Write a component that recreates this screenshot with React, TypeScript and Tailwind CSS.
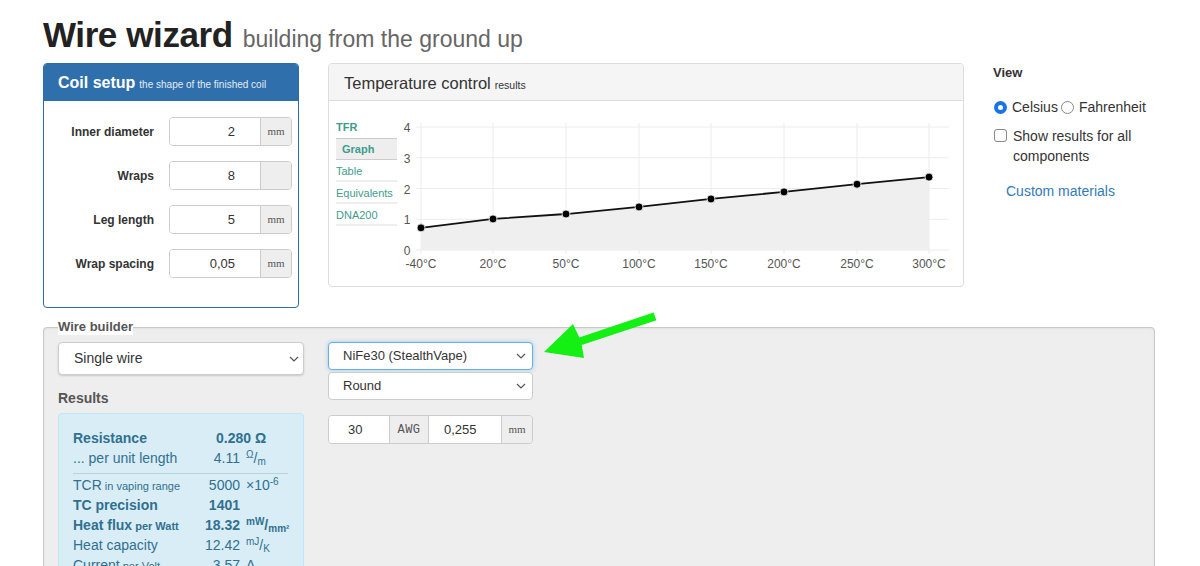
import React from 'react'

const xs = [421, 493, 566, 639, 711, 784, 857, 929]
const xLabels = ['-40°C', '20°C', '50°C', '100°C', '150°C', '200°C', '250°C', '300°C']
const vals = [0.72, 1.01, 1.17, 1.4, 1.66, 1.89, 2.14, 2.37]
const OX = 397
const OY = 101
const yOf = (v: number) => 250 - v * 30.75

function Chevron() {
  return (
    <svg width="10" height="6" viewBox="0 0 10 6" className="shrink-0">
      <path d="M1 1l4 4 4-4" fill="none" stroke="#555" strokeWidth="1.2" />
    </svg>
  )
}

function CoilRow({ label, value, unit }: { label: string; value: string; unit: string }) {
  return (
    <div className="flex items-center h-[29px]">
      <div className="w-[110px] text-right text-[12px] font-bold text-[#333]">{label}</div>
      <div className="ml-[15px] flex h-[29px] rounded-[4px] border border-[#ccc] overflow-hidden">
        <div className="w-[90px] bg-white text-right pr-[25px] text-[13px] text-[#333] flex items-center justify-end">
          {value}
        </div>
        <div className="w-[31px] bg-[#eee] border-l border-[#ccc] flex items-center justify-center text-[11px] text-[#555] font-['Liberation_Serif',serif]">
          {unit}
        </div>
      </div>
    </div>
  )
}

function Chart() {
  const pts = xs.map((x, i) => [x - OX, yOf(vals[i]) - OY])
  const line = pts.map((p) => p.join(',')).join(' ')
  const area = `${xs[0] - OX},${250 - OY} ${line} ${xs[7] - OX},${250 - OY}`
  return (
    <svg width="565" height="185" className="block">
      {[0, 1, 2, 3, 4].map((v) => (
        <g key={v}>
          <line x1={416 - OX} x2={949 - OX} y1={yOf(v) - OY} y2={yOf(v) - OY} stroke="#ececec" />
          <text x={407 - OX} y={yOf(v) - OY + 5} textAnchor="middle" fontSize="12" fill="#555">
            {v}
          </text>
        </g>
      ))}
      {xs.map((x, i) => (
        <g key={x}>
          <line x1={x - OX} x2={x - OX} y1={123 - OY} y2={254 - OY} stroke="#ececec" />
          <text x={x - OX} y={268 - OY} textAnchor="middle" fontSize="12" fill="#555">
            {xLabels[i]}
          </text>
        </g>
      ))}
      <polygon points={area} fill="#efefef" />
      <polyline points={line} fill="none" stroke="#111" strokeWidth="1.8" />
      {pts.map((p, i) => (
        <circle key={i} cx={p[0]} cy={p[1]} r="4" fill="#000" stroke="#fff" strokeWidth="0.8" />
      ))}
    </svg>
  )
}

function Tabs() {
  return (
    <div className="w-[61px] pt-[18px] text-[11px] text-[#3f9c8d]">
      <div className="font-bold h-[19px] leading-[17px]">TFR</div>
      <div className="h-[22px] bg-[#eee] border-t border-b border-[#ccc] font-bold pl-[6px] leading-[20px]">Graph</div>
      <div className="h-[22px] leading-[22px] border-b-2 border-[#eee]">Table</div>
      <div className="h-[22px] leading-[22px] border-b-2 border-[#eee]">Equivalents</div>
      <div className="h-[22px] leading-[22px] border-b-2 border-[#eee]">DNA200</div>
    </div>
  )
}

function ResRow({
  label,
  small,
  value,
  unit,
  bold,
}: {
  label: string
  small?: string
  value: string
  unit?: React.ReactNode
  bold?: boolean
}) {
  return (
    <div className={`flex items-center h-[20px] ${bold ? 'font-bold' : ''}`}>
      <div className="w-[125px] whitespace-nowrap">
        {label}
        {small && <span className="text-[11px]"> {small}</span>}
      </div>
      <div className="w-[42px] text-right">{value}</div>
      <div className="pl-[6px] whitespace-nowrap">{unit}</div>
    </div>
  )
}

export default function App() {
  return (
    <div className="relative min-h-[566px] bg-white font-['Liberation_Sans',Arial,sans-serif] text-[#333] pl-[43px] pt-[15px]">
      <div className="flex items-baseline h-[40px] mb-[8px]">
        <h1 className="text-[35px] font-bold text-[#222] leading-[40px] tracking-[-0.4px]">Wire wizard</h1>
        <span className="ml-[10px] text-[23px] text-[#666]">building from the ground up</span>
      </div>

      <div className="flex items-start">
        <div className="w-[256px] h-[245px] rounded-[4px] border border-[#2e6da4] overflow-hidden">
          <div className="h-[37px] bg-[#2f6fab] flex items-baseline pl-[14px] pt-[7px]">
            <span className="text-[16px] font-bold text-white">Coil setup</span>
            <span className="ml-[4px] text-[10px] text-[#e4ecf5]">the shape of the finished coil</span>
          </div>
          <div className="pt-[16px] flex flex-col gap-[15px]">
            <CoilRow label="Inner diameter" value="2" unit="mm" />
            <CoilRow label="Wraps" value="8" unit="" />
            <CoilRow label="Leg length" value="5" unit="mm" />
            <CoilRow label="Wrap spacing" value="0,05" unit="mm" />
          </div>
        </div>

        <div className="ml-[29px] w-[636px] h-[224px] rounded-[4px] border border-[#ddd] overflow-hidden">
          <div className="h-[37px] bg-[#f5f5f5] border-b border-[#ddd] flex items-baseline pl-[15px] pt-[7px]">
            <span className="text-[16.5px] text-[#333]">Temperature control</span>
            <span className="ml-[4px] text-[10.5px] text-[#333]">results</span>
          </div>
          <div className="flex pl-[7px]">
            <Tabs />
            <Chart />
          </div>
        </div>

        <div className="ml-[29px] pt-[0px] text-[14px] text-[#333]">
          <div className="text-[13px] font-bold h-[20px] leading-[20px]">View</div>
          <div className="mt-[14px] flex items-center h-[20px]">
            <span className="ml-[1px] w-[13px] h-[13px] rounded-full bg-[#1a73e8] flex items-center justify-center">
              <span className="w-[5px] h-[5px] rounded-full bg-white" />
            </span>
            <span className="ml-[5px]">Celsius</span>
            <span className="ml-[3px] w-[13px] h-[13px] rounded-full border border-[#888] bg-white" />
            <span className="ml-[5px]">Fahrenheit</span>
          </div>
          <div className="mt-[9px] flex items-start">
            <span className="ml-[1px] mt-[3px] w-[13px] h-[13px] rounded-[3px] border border-[#888] bg-white shrink-0" />
            <span className="ml-[6px] leading-[20px] w-[130px]">Show results for all components</span>
          </div>
          <div className="mt-[15px] ml-[13px] text-[#337ab7]">Custom materials</div>
        </div>
      </div>

      <fieldset className="mt-[11px] w-[1112px] min-h-[300px] border border-[#c8c8c8] rounded-[4px] bg-[#eee] pl-[14px] pb-[20px] shadow-[inset_0_1px_3px_rgba(0,0,0,0.05)]">
        <legend className="px-0 text-[13px] font-bold text-[#555] bg-white leading-[16px]">
          Wire builder
        </legend>
        <div className="flex pt-[7px]">
          <div className="w-[246px]">
            <div className="h-[33px] bg-white border border-[#ccc] rounded-[4px] shadow-[0_1px_2px_rgba(0,0,0,0.15)] flex items-center justify-between pl-[15px] pr-[4px] text-[14px] text-[#333]">
              <span>Single wire</span>
              <Chevron />
            </div>
            <div className="mt-[15px] text-[14px] font-bold text-[#555] h-[16px] leading-[16px]">Results</div>
            <div className="mt-[7px] h-[200px] bg-[#d9edf7] border border-[#bce8f1] rounded-[4px] pl-[14px] pt-[14px] text-[14px] text-[#31708f]">
              <div className="flex items-center h-[20px] font-bold">
                <div className="w-[143px]">Resistance</div>
                <div>0.280 Ω</div>
              </div>
              <ResRow
                label="... per unit length"
                value="4.11"
                unit={
                  <span>
                    <sup className="text-[10px]">Ω</sup>/<sub className="text-[10px]">m</sub>
                  </span>
                }
              />
              <div className="mt-[5px] mb-[1px] mr-[15px] border-t border-[#b7d3e0]" />
              <ResRow
                label="TCR"
                small="in vaping range"
                value="5000"
                unit={
                  <span>
                    ×10<sup className="text-[10px]">-6</sup>
                  </span>
                }
              />
              <ResRow label="TC precision" value="1401" bold />
              <ResRow
                label="Heat flux"
                small="per Watt"
                value="18.32"
                bold
                unit={
                  <span>
                    <sup className="text-[10px]">mW</sup>/<sub className="text-[10px]">mm²</sub>
                  </span>
                }
              />
              <ResRow
                label="Heat capacity"
                value="12.42"
                unit={
                  <span>
                    <sup className="text-[10px]">mJ</sup>/<sub className="text-[10px]">K</sub>
                  </span>
                }
              />
              <ResRow label="Current" small="per Volt" value="3.57" unit="A" />
            </div>
          </div>

          <div className="ml-[24px] w-[205px] text-[13px] text-[#333]">
            <div className="h-[28px] bg-white border border-[#66afe9] rounded-[4px] shadow-[0_0_4px_rgba(102,175,233,0.6)] flex items-center justify-between pl-[14px] pr-[6px]">
              <span>NiFe30 (StealthVape)</span>
              <Chevron />
            </div>
            <div className="mt-[2px] h-[28px] bg-white border border-[#ccc] rounded-[4px] flex items-center justify-between pl-[14px] pr-[6px]">
              <span>Round</span>
              <Chevron />
            </div>
            <div className="mt-[15px] h-[29px] flex border border-[#ccc] rounded-[4px] overflow-hidden">
              <div className="w-[60px] bg-white flex items-center pl-[19px]">30</div>
              <div className="w-[40px] bg-[#eee] border-l border-r border-[#ccc] flex items-center justify-center text-[12px] tracking-[0.5px] text-[#555] font-['Liberation_Mono',monospace]">
                AWG
              </div>
              <div className="w-[72px] bg-white flex items-center pl-[15px]">0,255</div>
              <div className="flex-1 bg-[#eee] border-l border-[#ccc] flex items-center justify-center text-[11px] text-[#555] font-['Liberation_Serif',serif]">
                mm
              </div>
            </div>
          </div>
        </div>
      </fieldset>

      <svg className="absolute left-0 top-0 pointer-events-none" width="1200" height="566">
        <polygon
          points="653.6,312.6 579.3,337.5 573,324 544,352 584,358 581.7,345.0 656.4,320.2"
          fill="#14ef14"
        />
      </svg>
    </div>
  )
}
